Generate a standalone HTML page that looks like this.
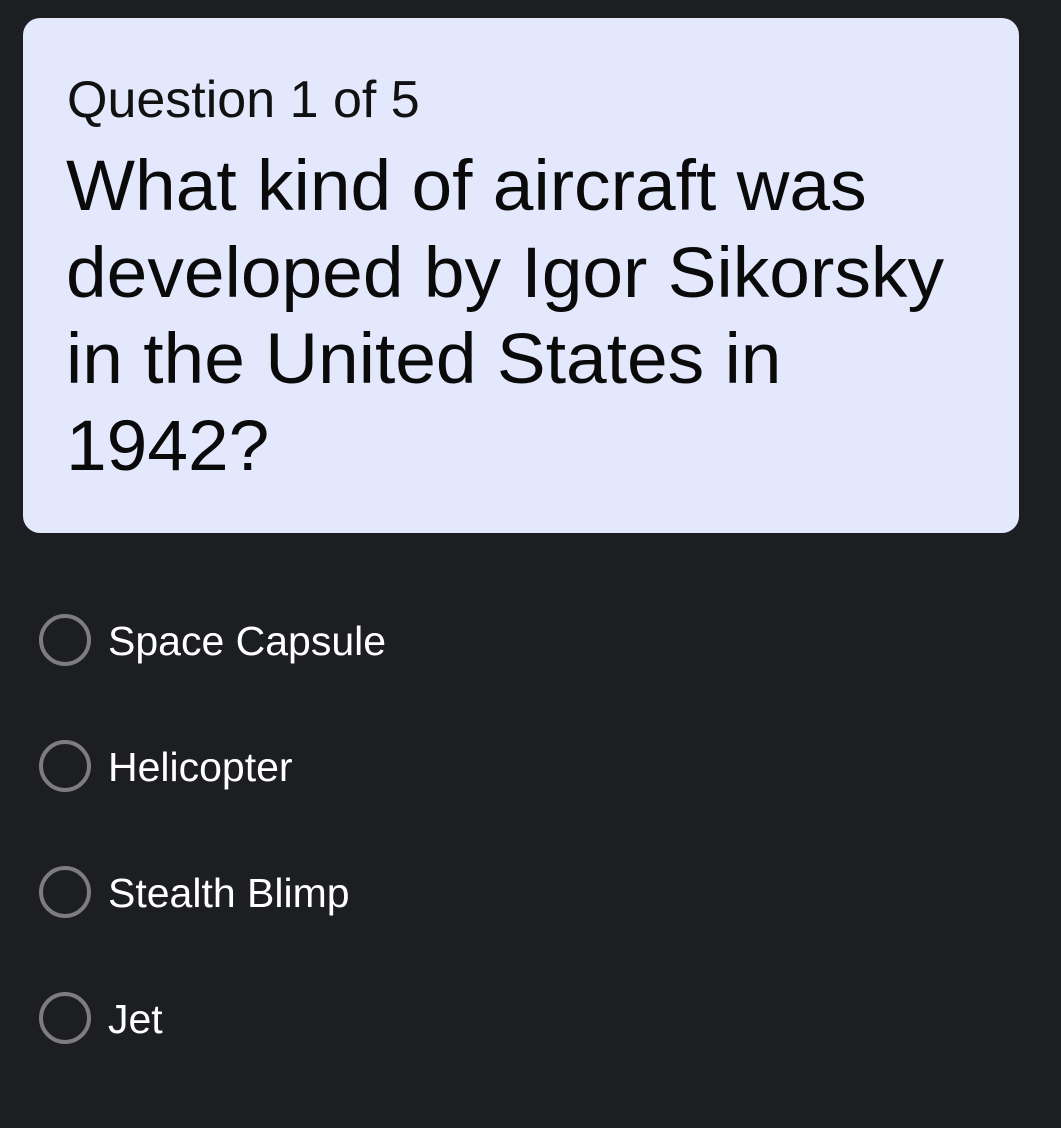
<!DOCTYPE html>
<html><head><meta charset="utf-8"><style>
html,body{margin:0;padding:0;}
body{width:1061px;height:1128px;background:#1d1e22;position:relative;overflow:hidden;font-family:"Liberation Sans",Arial,sans-serif;}
.card{position:absolute;left:23px;top:18px;width:996px;height:515px;background:#e3e8fd;border-radius:17px;}
.t{position:absolute;white-space:nowrap;transform-origin:0 0;}
.qn{left:67px;top:70px;font-size:52px;line-height:60px;color:#111;}
.q{left:66px;font-size:71px;line-height:86px;color:#0a0a0a;transform:scaleX(1.03);}
.opt{position:absolute;left:0;width:1061px;height:50px;}
.opt .c{position:absolute;left:39px;top:0;width:44px;height:44px;border:4px solid #7d7d80;border-radius:50%;}
.opt .l{position:absolute;left:108px;top:2px;font-size:41px;line-height:50px;color:#fff;white-space:nowrap;}
</style></head><body>
<div class="card"></div>
<div class="t qn">Question 1 of 5</div>
<div class="t q" style="top:144px">What kind of aircraft was</div>
<div class="t q" style="top:231px">developed by Igor Sikorsky</div>
<div class="t q" style="top:317px">in the United States in</div>
<div class="t q" style="top:404px">1942?</div>
<div class="opt" style="top:614px"><div class="c"></div><div class="l">Space Capsule</div></div>
<div class="opt" style="top:740px"><div class="c"></div><div class="l">Helicopter</div></div>
<div class="opt" style="top:866px"><div class="c"></div><div class="l">Stealth Blimp</div></div>
<div class="opt" style="top:992px"><div class="c"></div><div class="l">Jet</div></div>
</body></html>
